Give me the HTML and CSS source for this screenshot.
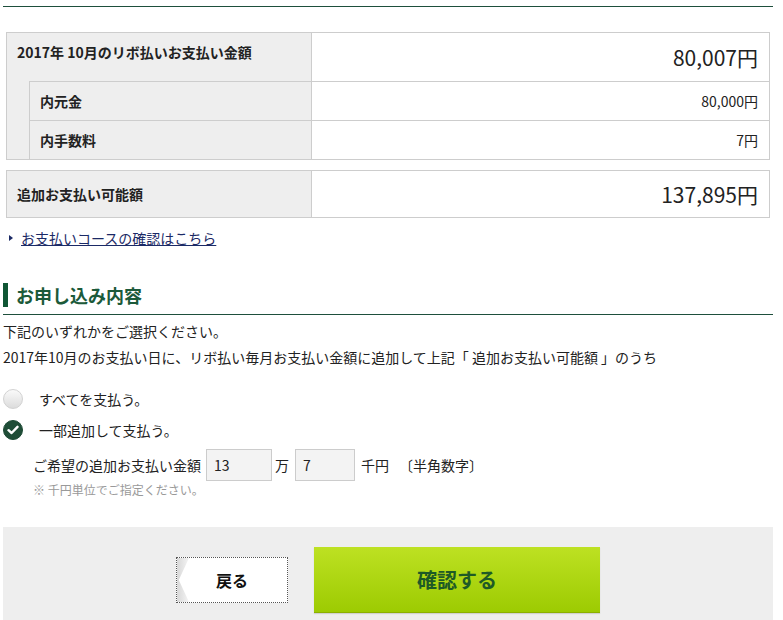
FILE: index.html
```html
<!DOCTYPE html>
<html lang="ja">
<head>
<meta charset="utf-8">
<title>リボ払い 追加お支払い</title>
<link rel="stylesheet" href="styles.css">
</head>
<body>
<div class="page">
  <div class="topline"></div>

  <div class="paytable">
    <div class="lbl lbl-main">2017年 10月のリボ払いお支払い金額</div>
    <div class="val val-big val-first">80,007円</div>
    <div class="indent"></div>
    <div class="lbl lbl-sub">内元金</div>
    <div class="val">80,000円</div>
    <div class="lbl lbl-sub">内手数料</div>
    <div class="val">7円</div>
  </div>

  <div class="paytable paytable-single">
    <div class="lbl lbl-center">追加お支払い可能額</div>
    <div class="val val-big">137,895円</div>
  </div>

  <p class="linkline"><span class="tri"></span><a href="#">お支払いコースの確認はこちら</a></p>

  <div class="section-head">
    <h2>お申し込み内容</h2>
  </div>

  <p class="text first">下記のいずれかをご選択ください。</p>
  <p class="text second">2017年10月のお支払い日に、リボ払い毎月お支払い金額に追加して上記「 追加お支払い可能額 」のうち</p>

  <div class="options">
    <label class="opt">
      <span class="radio"></span>
      <span>すべてを支払う。</span>
    </label>
    <label class="opt">
      <span class="radio radio-on"><svg width="12" height="10" viewBox="0 0 12 10"><path d="M1.5 5.2 L4.6 8 L10.5 1.8" fill="none" stroke="#fff" stroke-width="2.4" stroke-linecap="round" stroke-linejoin="round"/></svg></span>
      <span>一部追加して支払う。</span>
    </label>
    <div class="amount">
      <span>ご希望の追加お支払い金額</span>
      <input class="num num-man" type="text" value="13">
      <span class="unit-man">万</span>
      <input class="num num-sen" type="text" value="7">
      <span class="unit-sen">千円</span>
      <span class="hint">〔半角数字〕</span>
    </div>
    <p class="note">※ 千円単位でご指定ください。</p>
  </div>

  <div class="actions">
    <button class="btn-back" type="button">戻る</button>
    <button class="btn-confirm" type="button">確認する</button>
  </div>
</div>
</body>
</html>
```

FILE: styles.css
```css
* { box-sizing: border-box; }

body {
  margin: 0;
  font-family: "Noto Sans CJK JP", "Noto Sans", sans-serif;
  font-size: 14px;
  color: #222;
  background: #fff;
}

.page {
  width: 770px;
  margin-left: 3px;
  padding-top: 6px;
}

.topline {
  border-top: 1px solid #1e4f3c;
}

.paytable {
  margin: 25px 3px 0;
  border: 1px solid #cdcdcd;
  display: grid;
  grid-template-columns: 23px 282px 1fr;
  grid-template-rows: 48px 39px 39px;
}

.paytable-single {
  margin-top: 10px;
  grid-template-rows: 46px;
}

.lbl {
  background: #eee;
  font-weight: bold;
  line-height: 20px;
  border-right: 1px solid #cdcdcd;
  display: flex;
  align-items: center;
  padding-left: 10px;
}

.lbl-main {
  grid-column: 1 / 3;
  align-items: flex-start;
  padding-top: 9px;
}

.lbl-center {
  grid-column: 1 / 3;
}

.lbl-sub {
  grid-column: 2;
  border-top: 1px solid #cdcdcd;
}

.indent {
  grid-column: 1;
  grid-row: 2 / 4;
  background: #eee;
  border-right: 1px solid #cdcdcd;
}

.val {
  grid-column: 3;
  display: flex;
  align-items: center;
  justify-content: flex-end;
  padding-right: 11px;
  border-top: 1px solid #cdcdcd;
  font-size: 14px;
  color: #222;
}

.val-first,
.paytable-single .val {
  border-top: none;
}

.val-big {
  font-size: 21px;
}

.linkline {
  margin: 10px 0 0;
  line-height: 20px;
  display: flex;
  align-items: center;
  padding-left: 6px;
}

.tri {
  width: 0;
  height: 0;
  border-top: 3px solid transparent;
  border-bottom: 3px solid transparent;
  border-left: 4px solid #1b2a66;
  margin-right: 8px;
  margin-top: -1px;
}

.linkline a {
  color: #1b2a66;
  text-decoration: underline;
}

.section-head {
  margin-top: 35px;
  border-bottom: 1px solid #1e4f3c;
  padding-bottom: 7px;
}

.section-head h2 {
  margin: 0;
  font-size: 18px;
  line-height: 24px;
  font-weight: bold;
  color: #1c5a3a;
  border-left: 5px solid #0f5634;
  padding-left: 8px;
}

.text {
  margin: 0;
  line-height: 20px;
  color: #222;
}

.text.first { margin-top: 6px; }
.text.second { margin-top: 6px; }

.options {
  margin-top: 16px;
}

.opt {
  display: flex;
  align-items: center;
  height: 31px;
  gap: 16px;
}

.radio {
  width: 20px;
  height: 20px;
  border-radius: 50%;
  border: 1px solid #d2d2d2;
  background: linear-gradient(#fafafa, #dcdcdc);
  display: flex;
  align-items: center;
  justify-content: center;
}

.radio-on {
  border-color: #1d4a35;
  background: #1f4d37;
}

.amount {
  margin-top: 4px;
  padding-left: 30px;
  display: flex;
  align-items: center;
}

.num {
  height: 32px;
  border: 1px solid #ccc;
  background: #f3f3f3;
  font: inherit;
  font-size: 14px;
  color: #222;
  padding: 0 7px;
  margin: 0;
}

.num-man {
  width: 66px;
  margin-left: 5px;
}

.unit-man {
  margin-left: 3px;
}

.num-sen {
  width: 60px;
  margin-left: 6px;
}

.unit-sen {
  margin-left: 6px;
}

.hint {
  margin-left: 10px;
}

.note {
  margin: 1px 0 0;
  padding-left: 30px;
  font-size: 12px;
  line-height: 16px;
  color: #999;
}

.actions {
  margin-top: 29px;
  background: #eee;
  padding: 20px 0;
  display: flex;
  justify-content: center;
  align-items: center;
  gap: 26px;
}

.btn-back {
  position: relative;
  width: 112px;
  height: 46px;
  background: #fff;
  border: 1px dotted #555;
  font: inherit;
  font-size: 16px;
  font-weight: bold;
  color: #111;
  padding: 0;
  cursor: pointer;
  overflow: hidden;
}

.btn-back::before {
  content: "";
  position: absolute;
  left: 0;
  top: 0;
  width: 12px;
  height: 100%;
  background: linear-gradient(90deg, #d8d8d8, #f4f4f4);
  clip-path: polygon(0 0, 100% 0, 15% 50%, 100% 100%, 0 100%);
}

.btn-confirm {
  width: 286px;
  height: 66px;
  border: none;
  border-bottom: 1px solid #8cb000;
  background: linear-gradient(#bde122, #9dcb02);
  font: inherit;
  font-size: 20px;
  font-weight: bold;
  color: #1e5a26;
  cursor: pointer;
  box-shadow: 0 1px 1px rgba(0, 0, 0, 0.12);
}
```
